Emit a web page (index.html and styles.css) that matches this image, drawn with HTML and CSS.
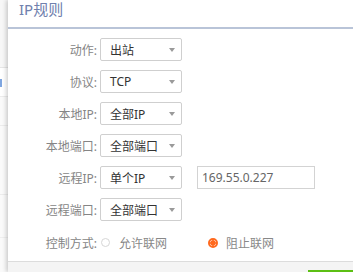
FILE: index.html
```html
<!DOCTYPE html>
<html>
<head>
<meta charset="utf-8">
<link rel="stylesheet" href="styles.css">
</head>
<body>
<div class="page">
  <div class="side">
    <div class="side-top"></div>
    <div class="side-row side-active"><i class="frag"></i></div>
    <div class="side-row"></div>
    <div class="side-row tall"></div>
    <div class="side-fill"></div>
  </div>
  <div class="dialog">
    <div class="header"><span class="title">IP规则</span></div>
    <div class="form">
      <div class="row">
        <label class="lbl">动作:</label>
        <div class="select"><span>出站</span><i class="arrow"></i></div>
      </div>
      <div class="row">
        <label class="lbl">协议:</label>
        <div class="select"><span>TCP</span><i class="arrow"></i></div>
      </div>
      <div class="row">
        <label class="lbl">本地IP:</label>
        <div class="select"><span>全部IP</span><i class="arrow"></i></div>
      </div>
      <div class="row">
        <label class="lbl">本地端口:</label>
        <div class="select"><span>全部端口</span><i class="arrow"></i></div>
      </div>
      <div class="row">
        <label class="lbl">远程IP:</label>
        <div class="select"><span>单个IP</span><i class="arrow"></i></div>
        <div class="input">169.55.0.227</div>
      </div>
      <div class="row">
        <label class="lbl">远程端口:</label>
        <div class="select"><span>全部端口</span><i class="arrow"></i></div>
      </div>
      <div class="row radio-row">
        <label class="lbl">控制方式:</label>
        <div class="radio"><i class="dot"></i><span>允许联网</span></div>
        <div class="radio checked"><i class="dot"></i><span>阻止联网</span></div>
      </div>
    </div>
    <div class="footer"><div class="btn"></div></div>
  </div>
</div>
</body>
</html>
```

FILE: styles.css
```css
html, body {
  margin: 0;
  padding: 0;
  width: 353px;
  height: 272px;
  overflow: hidden;
  background: #f5f5f5;
  font-family: "Noto Sans", "Noto Sans CJK SC", sans-serif;
}
.page {
  display: flex;
  height: 272px;
}
.side {
  width: 8px;
  display: flex;
  flex-direction: column;
  background: #fafafa;
}
.side-top {
  height: 67px;
  border-bottom: 1px solid #e6e6e6;
  background: #f7f7f7;
}
.side-row {
  height: 28px;
  border-bottom: 1px solid #ececec;
  display: flex;
  align-items: center;
}
.side-row.tall {
  height: 68px;
}
.side-active {
  background: #fff;
}
.frag {
  width: 2px;
  height: 8px;
  background: #7fa6e0;
  margin-top: 2px;
}
.side-fill {
  flex: 1;
  border-top: 1px solid #efefef;
  margin-top: 42px;
}
.dialog {
  flex: 1;
  background: #fff;
  display: flex;
  flex-direction: column;
  box-shadow: -2px 0 4px rgba(0, 0, 0, 0.18);
}
.header {
  height: 27px;
  border-bottom: 2px solid #b9c4d8;
  padding-left: 11px;
}
.title {
  display: block;
  font-size: 15px;
  line-height: 18px;
  color: #6f80ad;
}
.form {
  flex: 1;
  display: flex;
  flex-direction: column;
  gap: 9px;
  padding-top: 9px;
}
.row {
  display: flex;
  align-items: center;
  height: 23px;
}
.lbl {
  width: 89px;
  text-align: right;
  font-size: 12px;
  color: #858585;
  padding-right: 3px;
  white-space: nowrap;
}
.select {
  width: 82px;
  height: 23px;
  box-sizing: border-box;
  border: 1px solid #cfcfcf;
  border-radius: 2px;
  display: flex;
  align-items: center;
  padding-left: 9px;
  font-size: 12px;
  color: #333;
}
.select span {
  flex: 1;
}
.arrow {
  width: 0;
  height: 0;
  border-left: 3.5px solid transparent;
  border-right: 3.5px solid transparent;
  border-top: 4px solid #9a9a9a;
  margin-right: 6px;
}
.input {
  margin-left: 15px;
  width: 118px;
  height: 23px;
  box-sizing: border-box;
  border: 1px solid #d3d3d3;
  font-size: 12px;
  color: #666;
  line-height: 21px;
  padding-left: 4px;
}
.radio-row {
  margin-top: 1px;
}
.radio {
  display: flex;
  align-items: center;
  font-size: 12px;
  color: #888;
}
.radio .dot {
  width: 9px;
  height: 9px;
  border: 1px solid #d6d6d6;
  border-radius: 50%;
  box-sizing: border-box;
  margin-left: 1px;
  margin-right: 9px;
}
.radio.checked {
  margin-left: 41px;
}
.radio.checked .dot {
  width: 10px;
  height: 10px;
  border: 2px solid #ff6a1f;
  background: radial-gradient(circle, #ff6a1f 0 2.5px, #fff 3px);
  margin-left: 0;
  margin-right: 8px;
}
.footer {
  height: 10px;
  border-top: 1px solid #dcdcdc;
  background: #f4f4f4;
  display: flex;
  justify-content: flex-end;
  align-items: flex-end;
}
.btn {
  width: 45px;
  height: 2px;
  background: #5cbf14;
}
```
